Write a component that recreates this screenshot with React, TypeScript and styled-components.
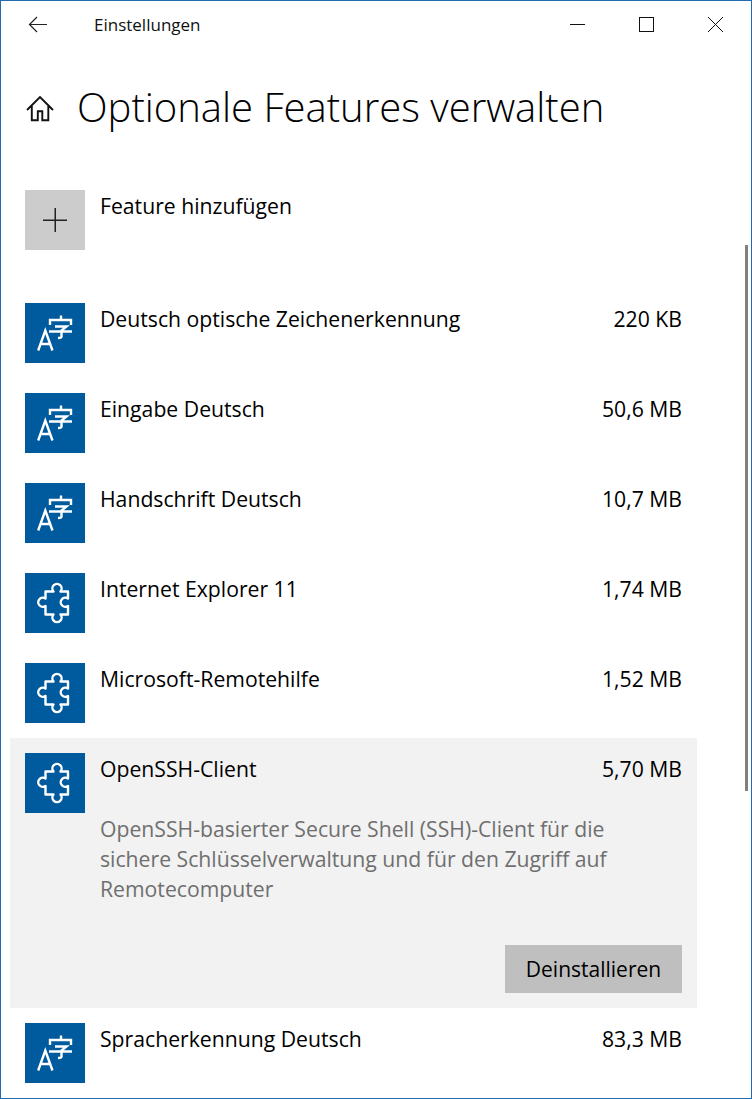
import React from "react";
import styled, { createGlobalStyle } from "styled-components";

const Global = createGlobalStyle`
  html, body { margin: 0; padding: 0; background: #fff; }
  body { font-family: "Open Sans", "Noto Sans", "Liberation Sans", sans-serif; color: #000; }
`;

const Window = styled.div`
  position: relative;
  box-sizing: border-box;
  width: 752px;
  height: 1099px;
  border: 1px solid #1f6db0;
  background: #fff;
  overflow: hidden;
`;

const TitleBar = styled.header`
  display: flex;
  align-items: center;
  height: 47px;
  padding: 0 1px 0 27px;
`;

const BackButton = styled.div`
  display: flex;
  width: 66px;
`;

const AppName = styled.span`
  font-size: 17px;
  color: #111;
  flex: 1;
`;

const WindowButton = styled.div`
  display: flex;
  align-items: center;
  justify-content: center;
  width: 69px;
`;

const PageHeader = styled.div`
  display: flex;
  align-items: flex-start;
  gap: 22px;
  height: 54px;
  margin-top: 32px;
  padding-left: 24px;
`;

const HomeSlot = styled.div`
  display: flex;
  padding-top: 15px;
`;

const Title = styled.h1`
  margin: 0;
  font-size: 40px;
  line-height: 54px;
  font-weight: 300;
  color: #000;
`;

const AddRow = styled.div`
  display: flex;
  gap: 15px;
  margin: 56px 0 53px 24px;
`;

const AddTile = styled.div`
  display: flex;
  align-items: center;
  justify-content: center;
  width: 60px;
  height: 60px;
  background: #cccccc;
`;

const ItemTitle = styled.span`
  font-size: 21.2px;
  line-height: 30px;
  color: #000;
  flex: 1;
`;

const AddLabel = styled(ItemTitle)`
  margin-top: 1px;
`;

const List = styled.div`
  display: flex;
  flex-direction: column;
`;

const Item = styled.div<{ $selected?: boolean; $tight?: boolean }>`
  display: grid;
  grid-template-columns: 60px 1fr;
  column-gap: 15px;
  width: 687px;
  box-sizing: border-box;
  margin-left: 9px;
  padding: ${(p) => (p.$selected ? "15px" : "0 15px")};
  margin-bottom: ${(p) => (p.$selected || p.$tight ? "15px" : "30px")};
  background: ${(p) => (p.$selected ? "#f2f2f2" : "transparent")};
`;

const Tile = styled.div`
  display: flex;
  align-items: center;
  justify-content: center;
  width: 60px;
  height: 60px;
  background: #005a9e;
`;

const ItemBody = styled.div`
  display: flex;
  flex-direction: column;
`;

const ItemHead = styled.div`
  display: flex;
  justify-content: space-between;
  margin-top: 1px;
`;

const Size = styled.span`
  font-size: 21.2px;
  line-height: 30px;
  color: #000;
`;

const Description = styled.p`
  margin: 30px 0 0;
  width: 560px;
  font-size: 21.2px;
  line-height: 30px;
  color: #6f6f6f;
`;

const Actions = styled.div`
  display: flex;
  justify-content: flex-end;
  margin-top: 41px;
`;

const UninstallButton = styled.button`
  width: 177px;
  height: 48px;
  border: 0;
  padding: 0;
  background: #bfbfbf;
  color: #000;
  font-family: inherit;
  font-size: 21px;
`;

const Scrollbar = styled.div`
  position: absolute;
  right: 3px;
  top: 244px;
  width: 3px;
  height: 546px;
  background: #808080;
`;

const BackIcon = () => (
  <svg width="19" height="17" viewBox="0 0 19 17" fill="none" stroke="#222" strokeWidth="1.2">
    <path d="M1.500 8.500H19M9 1 1.500 8.500 9 16" />
  </svg>
);

const MinIcon = () => (
  <svg width="15" height="15" viewBox="0 0 15 15" fill="none" stroke="#111" strokeWidth="1">
    <path d="M0 7.500h15" />
  </svg>
);

const MaxIcon = () => (
  <svg width="15" height="15" viewBox="0 0 15 15" fill="none" stroke="#111" strokeWidth="1">
    <rect x=".5" y=".5" width="14" height="14" />
  </svg>
);

const CloseIcon = () => (
  <svg width="15" height="15" viewBox="0 0 15 15" fill="none" stroke="#111" strokeWidth="1">
    <path d="M0 0l15 15M15 0 0 15" />
  </svg>
);

const HomeIcon = () => (
  <svg width="30" height="28" viewBox="0 0 30 28" fill="none" stroke="#111" strokeWidth="1.9">
    <path d="M2 15 15 2l13 13M6.800 11v14.200h6v-9h4.500v9h6V11" />
  </svg>
);

const PlusIcon = () => (
  <svg width="24" height="24" viewBox="0 0 24 24" fill="none" stroke="#222" strokeWidth="1.5">
    <path d="M12.250 0v24M0 12.250h24" />
  </svg>
);

const LanguageIcon = () => (
  <svg width="60" height="60" viewBox="0 0 60 60" fill="none" stroke="#fff" strokeWidth="2.4">
    <path d="M13.200 47.500 20.300 27.500 27.500 47.500M15.500 41h10" />
    <path d="M36 12.500v4M25 22v-5h21v5M30 23.500h11.500l-5.500 4.500M24 28.500h23M36.500 27v6.500c0 1-1 1.500-3.500 1.500" />
  </svg>
);

const PuzzleIcon = () => (
  <svg width="60" height="60" viewBox="0 0 60 60" fill="none" stroke="#fff" strokeWidth="2.4" strokeLinejoin="round">
    <path d="M20.500 18.500H28.500A4.600 4.600 0 1 1 35.500 18.500H43V25.500A4.600 4.600 0 1 0 43 33V41.500H35.500A4.600 4.600 0 1 1 28.500 41.500H20.500V33A4.600 4.600 0 1 1 20.500 25.500Z" />
  </svg>
);

type Row = { name: string; size: string; icon: "lang" | "puzzle" };

const before: Row[] = [
  { name: "Deutsch optische Zeichenerkennung", size: "220 KB", icon: "lang" },
  { name: "Eingabe Deutsch", size: "50,6 MB", icon: "lang" },
  { name: "Handschrift Deutsch", size: "10,7 MB", icon: "lang" },
  { name: "Internet Explorer 11", size: "1,74 MB", icon: "puzzle" },
];

const RowIcon = ({ icon }: { icon: Row["icon"] }) => (
  <Tile>{icon === "lang" ? <LanguageIcon /> : <PuzzleIcon />}</Tile>
);

const PlainRow = ({ row, tight }: { row: Row; tight?: boolean }) => (
  <Item $tight={tight}>
    <RowIcon icon={row.icon} />
    <ItemHead>
      <ItemTitle>{row.name}</ItemTitle>
      <Size>{row.size}</Size>
    </ItemHead>
  </Item>
);

export default function App() {
  return (
    <Window>
      <Global />
      <TitleBar>
        <BackButton>
          <BackIcon />
        </BackButton>
        <AppName>Einstellungen</AppName>
        <WindowButton>
          <MinIcon />
        </WindowButton>
        <WindowButton>
          <MaxIcon />
        </WindowButton>
        <WindowButton>
          <CloseIcon />
        </WindowButton>
      </TitleBar>
      <PageHeader>
        <HomeSlot>
          <HomeIcon />
        </HomeSlot>
        <Title>Optionale Features verwalten</Title>
      </PageHeader>
      <AddRow>
        <AddTile>
          <PlusIcon />
        </AddTile>
        <AddLabel>Feature hinzufügen</AddLabel>
      </AddRow>
      <List>
        {before.map((r) => (
          <PlainRow key={r.name} row={r} />
        ))}
        <PlainRow row={{ name: "Microsoft-Remotehilfe", size: "1,52 MB", icon: "puzzle" }} tight />
        <Item $selected>
          <RowIcon icon="puzzle" />
          <ItemBody>
            <ItemHead>
              <ItemTitle>OpenSSH-Client</ItemTitle>
              <Size>5,70 MB</Size>
            </ItemHead>
            <Description>
              OpenSSH-basierter Secure Shell (SSH)-Client für die sichere Schlüsselverwaltung und für den Zugriff auf
              Remotecomputer
            </Description>
            <Actions>
              <UninstallButton>Deinstallieren</UninstallButton>
            </Actions>
          </ItemBody>
        </Item>
        <PlainRow row={{ name: "Spracherkennung Deutsch", size: "83,3 MB", icon: "lang" }} />
      </List>
      <Scrollbar />
    </Window>
  );
}
